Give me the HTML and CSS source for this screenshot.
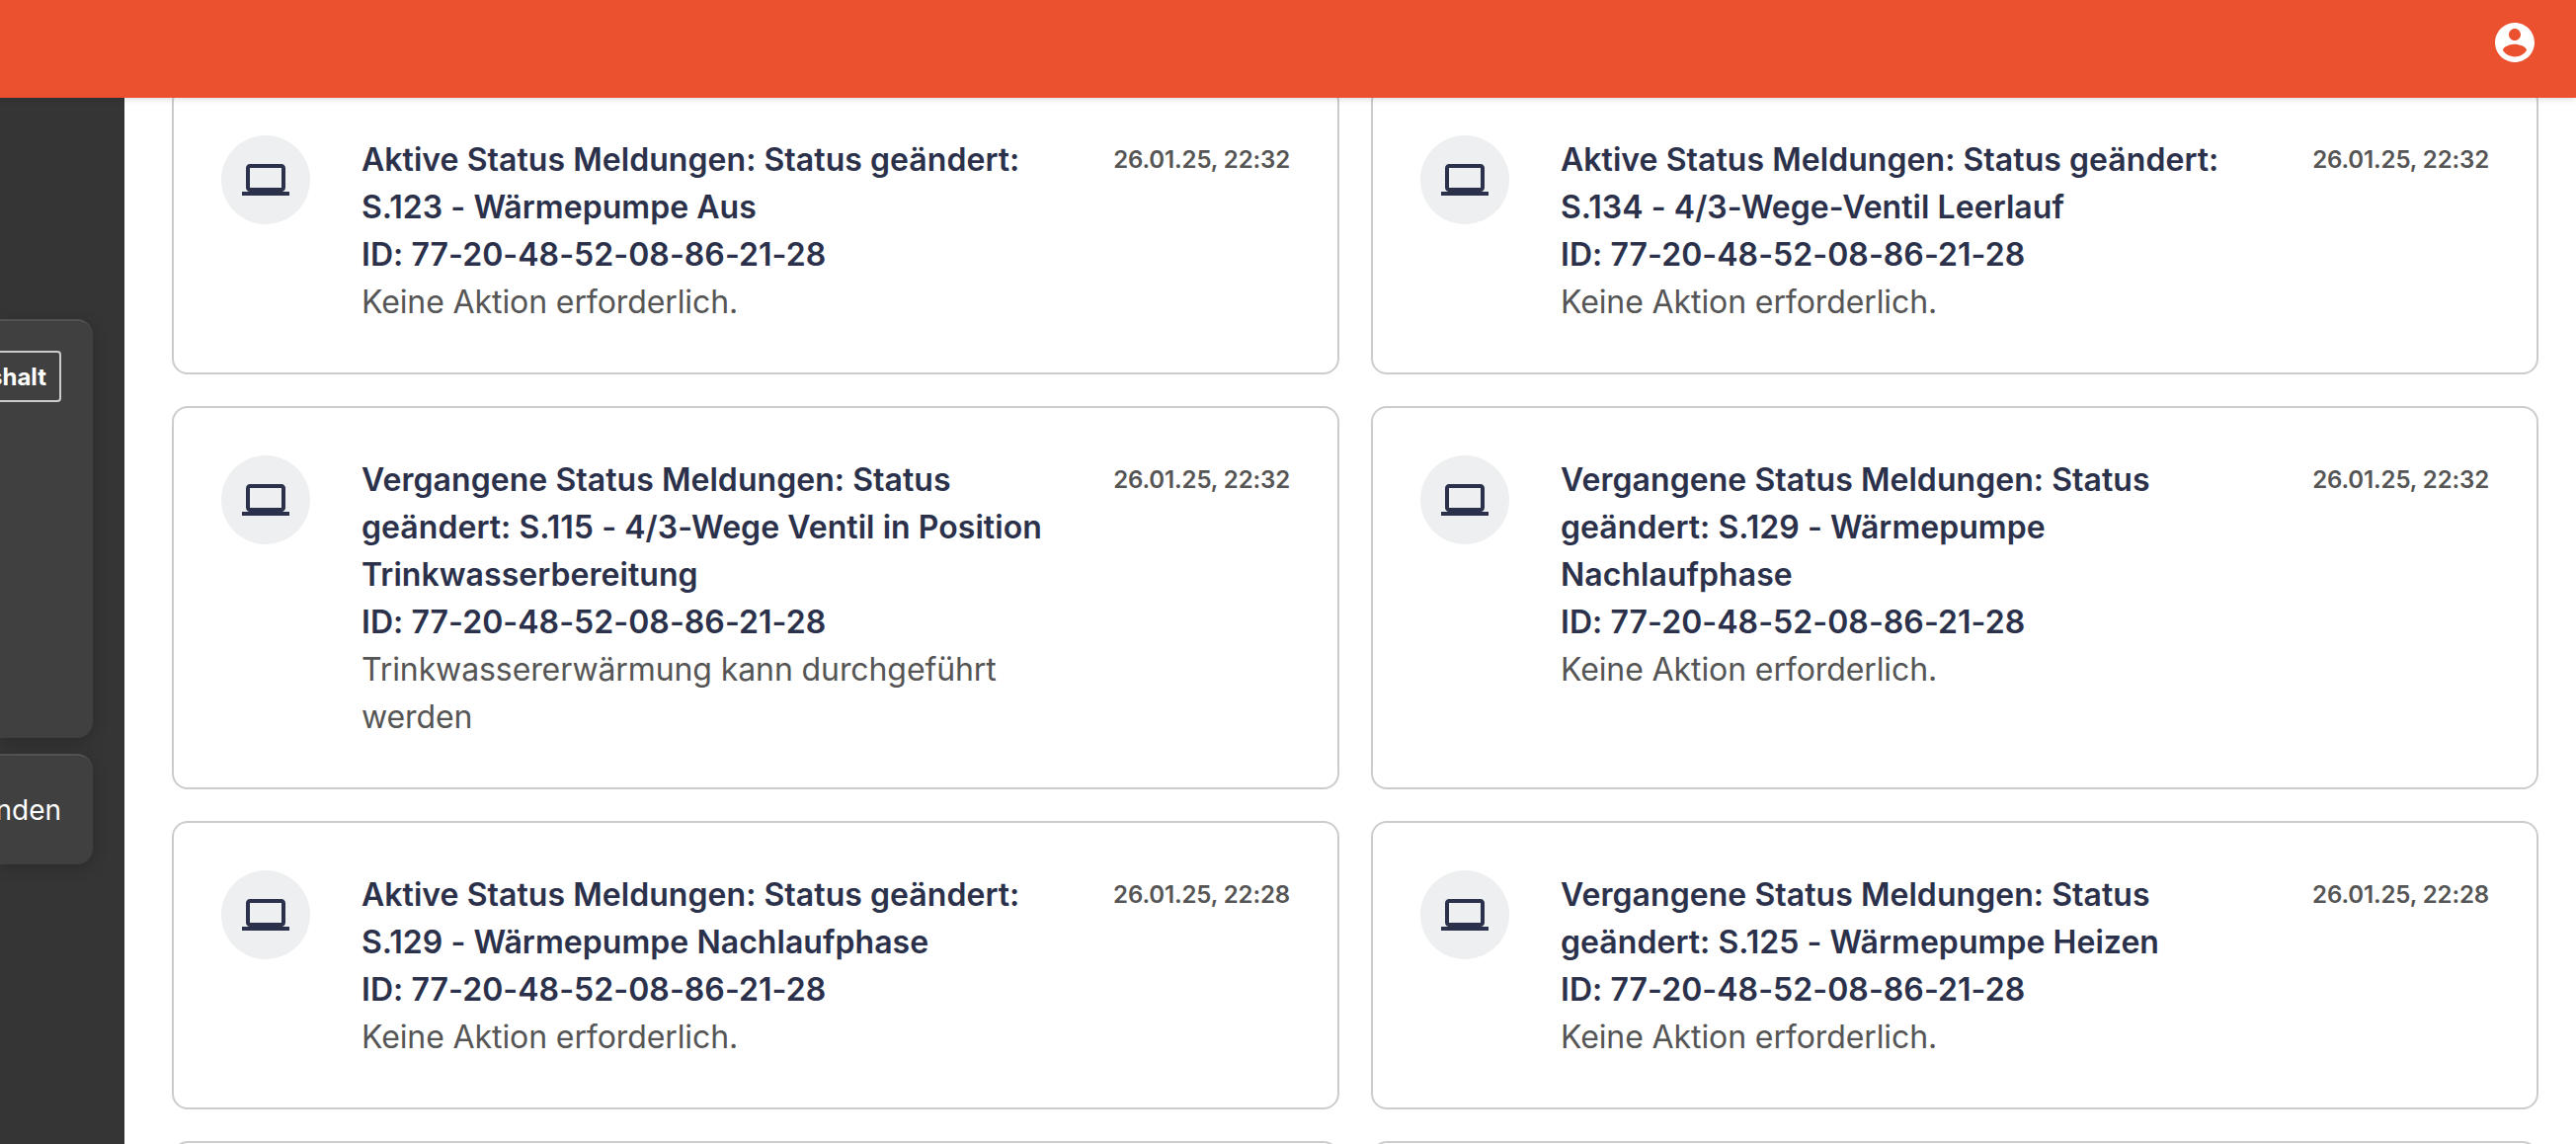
FILE: index.html
```html
<!DOCTYPE html>
<html lang="de">
<head>
    <meta charset="UTF-8">
    <meta name="viewport" content="width=device-width, initial-scale=1.0">
    <title>Meldungen</title>
    <link rel="stylesheet" href="styles.css">
</head>
<body>

    <svg class="sprite">
        <symbol id="laptop" viewBox="0 0 24 24">
            <path d="M20 18c1.1 0 1.99-.9 1.99-2L22 6c0-1.1-.9-2-2-2H4c-1.1 0-2 .9-2 2v10c0 1.1.9 2 2 2H0v2h24v-2h-4zM4 6h16v10H4V6z"/>
        </symbol>
    </svg>

    <!-- Header -->
    <header class="topbar">
        <svg class="account" viewBox="0 0 24 24">
            <path d="M12 2C6.48 2 2 6.48 2 12s4.48 10 10 10 10-4.48 10-10S17.52 2 12 2zm0 3c1.66 0 3 1.34 3 3s-1.34 3-3 3-3-1.34-3-3 1.34-3 3-3zm0 14.2c-2.5 0-4.71-1.28-6-3.22.03-1.99 4-3.08 6-3.08 1.99 0 5.97 1.09 6 3.08-1.29 1.94-3.5 3.22-6 3.22z"/>
        </svg>
    </header>

    <div class="layout">
        <!-- Sidebar -->
        <aside class="sidebar">
            <div class="side-card side-card-home">
                <span class="badge">shalt</span>
            </div>
            <div class="side-card side-card-link">nden</div>
        </aside>

        <!-- Messages -->
        <main class="messages">
            <article class="message">
                <div class="message-icon"><svg><use href="#laptop"/></svg></div>
                <div class="message-text">
                    <h2>Aktive Status Meldungen: Status geändert: S.123 - Wärmepumpe Aus<br>ID: 77-20-48-52-08-86-21-28</h2>
                    <p>Keine Aktion erforderlich.</p>
                </div>
                <time>26.01.25, 22:32</time>
            </article>
            <article class="message">
                <div class="message-icon"><svg><use href="#laptop"/></svg></div>
                <div class="message-text">
                    <h2>Aktive Status Meldungen: Status geändert: S.134 - 4/3-Wege-Ventil Leerlauf<br>ID: 77-20-48-52-08-86-21-28</h2>
                    <p>Keine Aktion erforderlich.</p>
                </div>
                <time>26.01.25, 22:32</time>
            </article>
            <article class="message">
                <div class="message-icon"><svg><use href="#laptop"/></svg></div>
                <div class="message-text">
                    <h2>Vergangene Status Meldungen: Status geändert: S.115 - 4/3-Wege Ventil in Position Trinkwasserbereitung<br>ID: 77-20-48-52-08-86-21-28</h2>
                    <p>Trinkwassererwärmung kann durchgeführt werden</p>
                </div>
                <time>26.01.25, 22:32</time>
            </article>
            <article class="message">
                <div class="message-icon"><svg><use href="#laptop"/></svg></div>
                <div class="message-text">
                    <h2>Vergangene Status Meldungen: Status geändert: S.129 - Wärmepumpe Nachlaufphase<br>ID: 77-20-48-52-08-86-21-28</h2>
                    <p>Keine Aktion erforderlich.</p>
                </div>
                <time>26.01.25, 22:32</time>
            </article>
            <article class="message">
                <div class="message-icon"><svg><use href="#laptop"/></svg></div>
                <div class="message-text">
                    <h2>Aktive Status Meldungen: Status geändert: S.129 - Wärmepumpe Nachlaufphase<br>ID: 77-20-48-52-08-86-21-28</h2>
                    <p>Keine Aktion erforderlich.</p>
                </div>
                <time>26.01.25, 22:28</time>
            </article>
            <article class="message">
                <div class="message-icon"><svg><use href="#laptop"/></svg></div>
                <div class="message-text">
                    <h2>Vergangene Status Meldungen: Status geändert: S.125 - Wärmepumpe Heizen<br>ID: 77-20-48-52-08-86-21-28</h2>
                    <p>Keine Aktion erforderlich.</p>
                </div>
                <time>26.01.25, 22:28</time>
            </article>
            <article class="message"></article>
            <article class="message"></article>
        </main>
    </div>

</body>
</html>
```

FILE: styles.css
```css
/* General styles */
* {
    box-sizing: border-box;
}

body {
    display: flex;
    flex-direction: column;
    height: 100vh;
    margin: 0;
    overflow: hidden;
    font-family: Inter, "Liberation Sans", sans-serif;
    font-size: 32px;
    line-height: 48px;
    color: #555;
    background-color: #fff;
}

.sprite {
    display: none;
}

/* Header */
.topbar {
    display: flex;
    justify-content: flex-end;
    flex-shrink: 0;
    height: 99px;
    padding: 19px 38px 0 0;
    background-color: #ec512f;
    box-shadow: 0 2px 6px rgba(0, 0, 0, 0.12);
    z-index: 1;
}

.account {
    width: 48px;
    height: 48px;
    fill: #fff;
}

.layout {
    display: flex;
    flex: 1;
    min-height: 0;
    overflow: hidden;
}

/* Sidebar */
.sidebar {
    display: flex;
    flex-direction: column;
    gap: 16px;
    flex-shrink: 0;
    width: 126px;
    padding: 224px 32px 0 0;
    color: #fff;
    background-color: #353535;
}

.side-card {
    display: flex;
    justify-content: flex-end;
    padding-right: 32px;
    border-top: 2px solid #525252;
    border-radius: 0 16px 16px 0;
    background-color: #404040;
    box-shadow: 0 4px 16px rgba(0, 0, 0, 0.2);
}

.side-card-home {
    height: 424px;
    padding-top: 30px;
}

.side-card-link {
    align-items: center;
    height: 112px;
    font-size: 28px;
}

.badge {
    height: 52px;
    padding-right: 13px;
    border: 2px solid #ccc;
    border-left: 0;
    border-radius: 0 4px 4px 0;
    font-size: 24px;
    font-weight: 700;
    line-height: 49px;
}

/* Messages */
.messages {
    display: grid;
    grid-template-columns: 1fr 1fr;
    grid-auto-rows: max-content;
    gap: 32px;
    flex: 1;
    margin-top: -12px;
    padding: 0 38px 0 48px;
}

.message {
    display: flex;
    padding: 48px 48px 47px;
    border: 2px solid #ccc;
    border-radius: 16px;
}

.message-icon {
    display: flex;
    align-items: center;
    justify-content: center;
    flex-shrink: 0;
    width: 90px;
    height: 90px;
    margin-right: 52px;
    border-radius: 50%;
    background-color: #edeff0;
}

.message-icon svg {
    width: 48px;
    height: 48px;
    fill: #2b314a;
}

.message-text {
    width: 700px;
    padding-top: 1px;
}

.message-text h2 {
    margin: 0;
    font-size: 32px;
    font-weight: 600;
    letter-spacing: 0.05px;
    color: #2b314a;
}

.message-text p {
    margin: 0;
    letter-spacing: -0.1px;
}

.message time {
    margin-left: auto;
    padding-top: 1px;
    font-size: 24px;
    font-weight: 600;
    letter-spacing: -0.12px;
    white-space: nowrap;
}
```
